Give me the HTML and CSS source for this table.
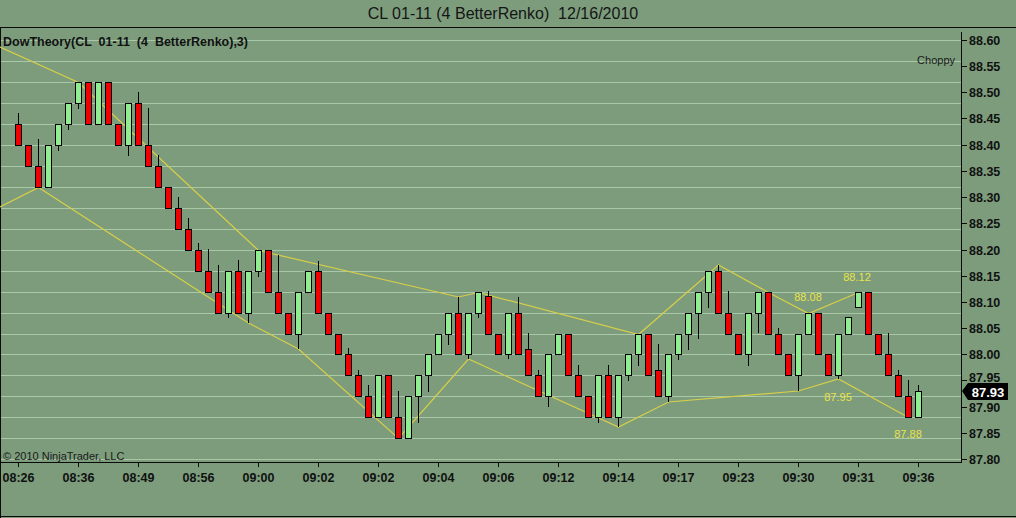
FILE: index.html
```html
<!DOCTYPE html>
<html>
<head>
<meta charset="utf-8">
<title>CL 01-11 (4 BetterRenko) 12/16/2010</title>
<link rel="stylesheet" href="styles.css">
</head>
<body>
<div class="window">
  <div class="title">CL 01-11 (4 BetterRenko)  12/16/2010</div>
  <svg class="chart" width="1016" height="491" viewBox="0 27 1016 491">
    <!-- gridlines every brick (0.04) -->
    <path class="grid" d="M1 40.5H961M1 61.5H961M1 82.5H961M1 103.5H961M1 124.5H961M1 145.5H961M1 166.5H961M1 187.5H961M1 208.5H961M1 229.5H961M1 250.5H961M1 271.5H961M1 292.5H961M1 313.5H961M1 334.5H961M1 354.5H961M1 375.5H961M1 396.5H961M1 417.5H961M1 438.5H961M1 459.5H961"/>

    <!-- frame -->
    <path class="frame" d="M0 27.5H1016M0.5 27V518M0 462.5H962M961.5 32V462.5M0 516.5H1016"/>

    <!-- price ticks -->
    <path class="frame" d="M961 40.5H967M961 66.5H967M961 92.5H967M961 118.5H967M961 145.5H967M961 171.5H967M961 197.5H967M961 223.5H967M961 250.5H967M961 276.5H967M961 302.5H967M961 328.5H967M961 354.5H967M961 380.5H967M961 407.5H967M961 433.5H967M961 459.5H967"/>

    <!-- time ticks -->
    <path class="frame" d="M18.5 462V467M78.5 462V467M138.5 462V467M198.5 462V467M258.5 462V467M318.5 462V467M378.5 462V467M438.5 462V467M498.5 462V467M558.5 462V467M618.5 462V467M678.5 462V467M738.5 462V467M798.5 462V467M858.5 462V467M918.5 462V467"/>

    <!-- zigzag -->
    <polyline class="zz" points="0,47 78.5,82.5 258.5,250.5 458.5,297 478.5,292.5 638.5,334.5 718.5,265 768.5,292.5 808.5,313.5 858.5,292.5"/>
    <polyline class="zz" points="0,207 38.5,187.5 248.5,323 298.5,349 398.5,438.5 468.5,359 618.5,427 668.5,402 798.5,391 838.5,379 908.5,417.5"/>

    <!-- wicks -->
    <path class="wick" d="M18.5 113V124.5M38.5 139V166.5M58.5 145.5V151M68.5 124.5V130M78.5 103.5V109M128.5 145.5V156M138.5 92V103.5M148.5 108V145.5M158.5 155V166.5M178.5 197V208.5M188.5 218V229.5M198.5 243V250.5M208.5 249V271.5M218.5 265V292.5M228.5 313.5V318M238.5 260V271.5M248.5 313.5V323M258.5 271.5V277M278.5 255V292.5M298.5 334.5V349M318.5 261V271.5M348.5 348V354.5M358.5 370V375.5M368.5 385V396.5M398.5 391V417.5M418.5 396.5V423M428.5 375.5V392M448.5 334.5V345M458.5 297V313.5M468.5 354.5V359M478.5 313.5V318M488.5 291V296.5M508.5 354.5V359M518.5 297V313.5M528.5 333V349.5M538.5 370V375.5M548.5 396.5V407M578.5 365V375.5M598.5 417.5V423M608.5 365V375.5M618.5 417.5V427M628.5 375.5V381M638.5 354.5V366M658.5 344V370.5M668.5 396.5V402M678.5 354.5V360M688.5 334.5V350M698.5 313.5V339M708.5 292.5V308M718.5 265V271.5M728.5 291V313.5M748.5 354.5V366M758.5 313.5V333M778.5 328V334.5M798.5 375.5V391M838.5 375.5V379M888.5 333V354.5M898.5 370V375.5M908.5 380V396.5M918.5 385V391.5"/>

    <!-- bodies -->
    <g class="bars">
      <rect class="dn" x="15.5" y="124.5" width="6" height="21"/>
      <rect class="dn" x="25.5" y="145.5" width="6" height="21"/>
      <rect class="dn" x="35.5" y="166.5" width="6" height="21"/>
      <rect class="up" x="45.5" y="145.5" width="6" height="42"/>
      <rect class="up" x="55.5" y="124.5" width="6" height="21"/>
      <rect class="up" x="65.5" y="103.5" width="6" height="21"/>
      <rect class="up" x="75.5" y="82.5" width="6" height="21"/>
      <rect class="dn" x="85.5" y="82.5" width="6" height="42"/>
      <rect class="up" x="95.5" y="82.5" width="6" height="42"/>
      <rect class="dn" x="105.5" y="82.5" width="6" height="42"/>
      <rect class="dn" x="115.5" y="124.5" width="6" height="21"/>
      <rect class="up" x="125.5" y="103.5" width="6" height="42"/>
      <rect class="dn" x="135.5" y="103.5" width="6" height="42"/>
      <rect class="dn" x="145.5" y="145.5" width="6" height="21"/>
      <rect class="dn" x="155.5" y="166.5" width="6" height="21"/>
      <rect class="dn" x="165.5" y="187.5" width="6" height="21"/>
      <rect class="dn" x="175.5" y="208.5" width="6" height="21"/>
      <rect class="dn" x="185.5" y="229.5" width="6" height="21"/>
      <rect class="dn" x="195.5" y="250.5" width="6" height="21"/>
      <rect class="dn" x="205.5" y="271.5" width="6" height="21"/>
      <rect class="dn" x="215.5" y="292.5" width="6" height="21"/>
      <rect class="up" x="225.5" y="271.5" width="6" height="42"/>
      <rect class="dn" x="235.5" y="271.5" width="6" height="42"/>
      <rect class="up" x="245.5" y="271.5" width="6" height="42"/>
      <rect class="up" x="255.5" y="250.5" width="6" height="21"/>
      <rect class="dn" x="265.5" y="250.5" width="6" height="42"/>
      <rect class="dn" x="275.5" y="292.5" width="6" height="21"/>
      <rect class="dn" x="285.5" y="313.5" width="6" height="21"/>
      <rect class="up" x="295.5" y="292.5" width="6" height="42"/>
      <rect class="up" x="305.5" y="271.5" width="6" height="21"/>
      <rect class="dn" x="315.5" y="271.5" width="6" height="42"/>
      <rect class="dn" x="325.5" y="313.5" width="6" height="21"/>
      <rect class="dn" x="335.5" y="334.5" width="6" height="20"/>
      <rect class="dn" x="345.5" y="354.5" width="6" height="21"/>
      <rect class="dn" x="355.5" y="375.5" width="6" height="21"/>
      <rect class="dn" x="365.5" y="396.5" width="6" height="21"/>
      <rect class="up" x="375.5" y="375.5" width="6" height="42"/>
      <rect class="dn" x="385.5" y="375.5" width="6" height="42"/>
      <rect class="dn" x="395.5" y="417.5" width="6" height="21"/>
      <rect class="up" x="405.5" y="396.5" width="6" height="42"/>
      <rect class="up" x="415.5" y="375.5" width="6" height="21"/>
      <rect class="up" x="425.5" y="354.5" width="6" height="21"/>
      <rect class="up" x="435.5" y="334.5" width="6" height="20"/>
      <rect class="up" x="445.5" y="313.5" width="6" height="21"/>
      <rect class="dn" x="455.5" y="313.5" width="6" height="41"/>
      <rect class="up" x="465.5" y="313.5" width="6" height="41"/>
      <rect class="up" x="475.5" y="292.5" width="6" height="21"/>
      <rect class="dn" x="485.5" y="296.5" width="6" height="38"/>
      <rect class="dn" x="495.5" y="334.5" width="6" height="20"/>
      <rect class="up" x="505.5" y="313.5" width="6" height="41"/>
      <rect class="dn" x="515.5" y="313.5" width="6" height="41"/>
      <rect class="dn" x="525.5" y="349.5" width="6" height="26"/>
      <rect class="dn" x="535.5" y="375.5" width="6" height="21"/>
      <rect class="up" x="545.5" y="354.5" width="6" height="42"/>
      <rect class="up" x="555.5" y="334.5" width="6" height="20"/>
      <rect class="dn" x="565.5" y="334.5" width="6" height="41"/>
      <rect class="dn" x="575.5" y="375.5" width="6" height="21"/>
      <rect class="dn" x="585.5" y="396.5" width="6" height="21"/>
      <rect class="up" x="595.5" y="375.5" width="6" height="42"/>
      <rect class="dn" x="605.5" y="375.5" width="6" height="42"/>
      <rect class="up" x="615.5" y="375.5" width="6" height="42"/>
      <rect class="up" x="625.5" y="354.5" width="6" height="21"/>
      <rect class="up" x="635.5" y="334.5" width="6" height="20"/>
      <rect class="dn" x="645.5" y="334.5" width="6" height="41"/>
      <rect class="dn" x="655.5" y="370.5" width="6" height="26"/>
      <rect class="up" x="665.5" y="354.5" width="6" height="42"/>
      <rect class="up" x="675.5" y="334.5" width="6" height="20"/>
      <rect class="up" x="685.5" y="313.5" width="6" height="21"/>
      <rect class="up" x="695.5" y="292.5" width="6" height="21"/>
      <rect class="up" x="705.5" y="271.5" width="6" height="21"/>
      <rect class="dn" x="715.5" y="271.5" width="6" height="42"/>
      <rect class="dn" x="725.5" y="313.5" width="6" height="21"/>
      <rect class="dn" x="735.5" y="334.5" width="6" height="20"/>
      <rect class="up" x="745.5" y="313.5" width="6" height="41"/>
      <rect class="up" x="755.5" y="292.5" width="6" height="21"/>
      <rect class="dn" x="765.5" y="292.5" width="6" height="42"/>
      <rect class="dn" x="775.5" y="334.5" width="6" height="20"/>
      <rect class="dn" x="785.5" y="354.5" width="6" height="21"/>
      <rect class="up" x="795.5" y="334.5" width="6" height="41"/>
      <rect class="up" x="805.5" y="313.5" width="6" height="21"/>
      <rect class="dn" x="815.5" y="313.5" width="6" height="41"/>
      <rect class="dn" x="825.5" y="354.5" width="6" height="21"/>
      <rect class="up" x="835.5" y="334.5" width="6" height="41"/>
      <rect class="up" x="845.5" y="317.5" width="6" height="17"/>
      <rect class="up" x="855.5" y="292.5" width="6" height="15"/>
      <rect class="dn" x="865.5" y="292.5" width="6" height="42"/>
      <rect class="dn" x="875.5" y="334.5" width="6" height="20"/>
      <rect class="dn" x="885.5" y="354.5" width="6" height="21"/>
      <rect class="dn" x="895.5" y="375.5" width="6" height="21"/>
      <rect class="dn" x="905.5" y="396.5" width="6" height="21"/>
      <rect class="up" x="915.5" y="391.5" width="6" height="26"/>
    </g>

    <!-- swing labels -->
    <g class="swing">
      <text x="808" y="301">88.08</text>
      <text x="857" y="281">88.12</text>
      <text x="838" y="401">87.95</text>
      <text x="908" y="438">87.88</text>
    </g>

    <!-- notes -->
    <text class="indicator" x="3" y="46">DowTheory(CL  01-11  (4  BetterRenko),3)</text>
    <text class="note" x="955" y="64" text-anchor="end">Choppy</text>
    <text class="note" x="3" y="459.5">© 2010 NinjaTrader, LLC</text>

    <!-- price axis -->
    <g class="axis">
      <text x="969" y="45">88.60</text>
      <text x="969" y="71">88.55</text>
      <text x="969" y="97">88.50</text>
      <text x="969" y="123">88.45</text>
      <text x="969" y="150">88.40</text>
      <text x="969" y="176">88.35</text>
      <text x="969" y="202">88.30</text>
      <text x="969" y="228">88.25</text>
      <text x="969" y="255">88.20</text>
      <text x="969" y="281">88.15</text>
      <text x="969" y="307">88.10</text>
      <text x="969" y="333">88.05</text>
      <text x="969" y="359">88.00</text>
      <text class="hidden-part" x="969" y="382">87.95</text>
      <text x="969" y="412">87.90</text>
      <text x="969" y="438">87.85</text>
      <text x="969" y="464">87.80</text>
    </g>

    <!-- current price badge -->
    <path class="badge" d="M962 391L968 383H1008V400H968Z"/>
    <text class="badge-text" x="988" y="396.5">87.93</text>

    <!-- time axis -->
    <g class="axis time">
      <text x="18.5" y="482">08:26</text>
      <text x="78.5" y="482">08:36</text>
      <text x="138.5" y="482">08:49</text>
      <text x="198.5" y="482">08:56</text>
      <text x="258.5" y="482">09:00</text>
      <text x="318.5" y="482">09:02</text>
      <text x="378.5" y="482">09:02</text>
      <text x="438.5" y="482">09:04</text>
      <text x="498.5" y="482">09:06</text>
      <text x="558.5" y="482">09:12</text>
      <text x="618.5" y="482">09:14</text>
      <text x="678.5" y="482">09:17</text>
      <text x="738.5" y="482">09:23</text>
      <text x="798.5" y="482">09:30</text>
      <text x="858.5" y="482">09:31</text>
      <text x="918.5" y="482">09:36</text>
    </g>
  </svg>
</div>
</body>
</html>
```

FILE: styles.css
```css
html, body {
  margin: 0;
  padding: 0;
}

body {
  width: 1016px;
  height: 518px;
  overflow: hidden;
  background: #7c9c7c;
  font-family: "Liberation Sans", Arial, sans-serif;
  color: #111;
}

.window {
  width: 1016px;
  height: 518px;
  display: flex;
  flex-direction: column;
}

.title {
  height: 27px;
  line-height: 27px;
  font-size: 16px;
  text-align: center;
  white-space: pre;
  padding-right: 10px;
  color: #151515;
}

.chart {
  display: block;
  flex: none;
}

.grid {
  stroke: #a8c8a8;
  stroke-width: 1;
  fill: none;
}

.frame {
  stroke: #0a0a0a;
  stroke-width: 1;
  fill: none;
}

.zz {
  fill: none;
  stroke: #d8cf48;
  stroke-width: 1.2;
}

.wick {
  stroke: #000;
  stroke-width: 1;
  fill: none;
}

.bars rect {
  stroke: #000;
  stroke-width: 1;
}

.bars .up {
  fill: #90ee90;
}

.bars .dn {
  fill: #f00000;
}

.swing text {
  font-size: 11px;
  fill: #ece24a;
  text-anchor: middle;
}

.indicator {
  font-size: 12.5px;
  font-weight: bold;
  fill: #111;
  white-space: pre;
}

.note {
  font-size: 11px;
  fill: #1a1a1a;
}

.axis text {
  font-size: 12.5px;
  font-weight: bold;
  fill: #111;
}

.axis.time text {
  text-anchor: middle;
}

.badge {
  fill: #000;
}

.badge-text {
  font-size: 13px;
  font-weight: bold;
  fill: #fff;
  text-anchor: middle;
}
```
